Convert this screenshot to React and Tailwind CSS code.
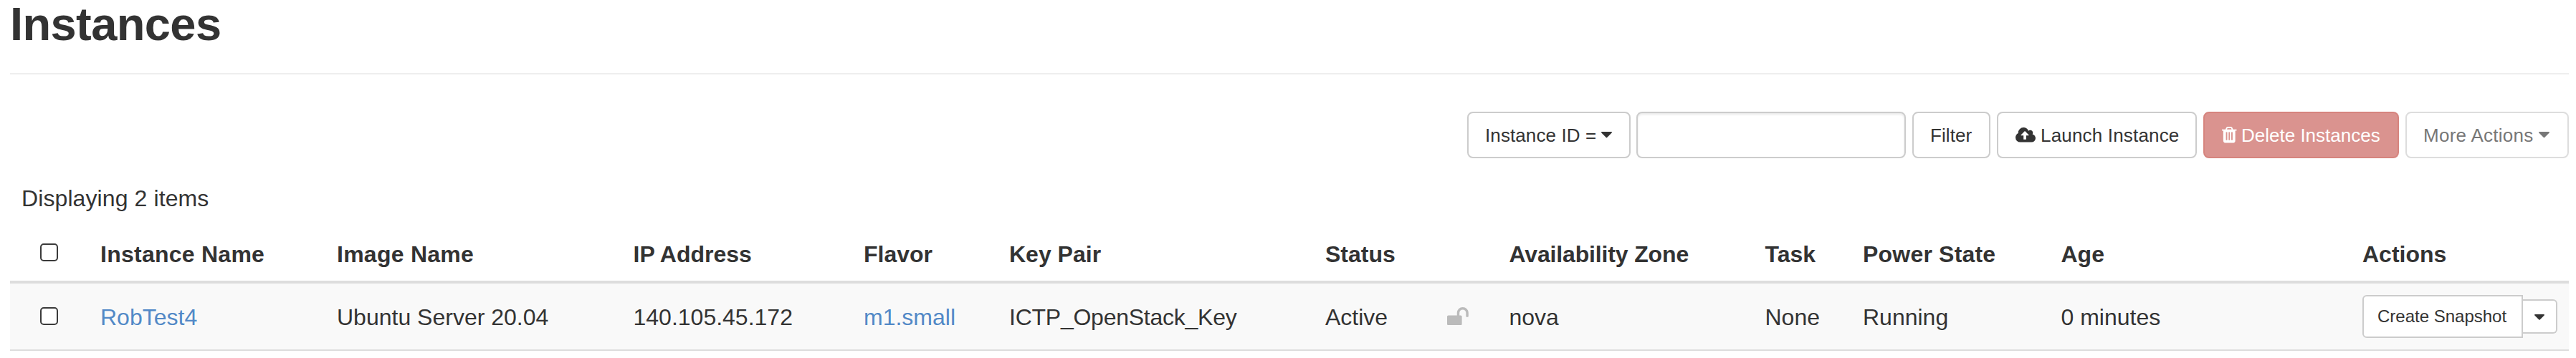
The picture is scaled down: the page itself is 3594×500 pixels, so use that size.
const FONT = 'font-["Liberation_Sans",Arial,sans-serif]';

const COLUMNS =
  "grid grid-cols-[126px_330px_413.5px_321.5px_203px_441px_170px_86.5px_357px_136.5px_276.5px_420.5px_288px]";

function Caret({ className }) {
  return (
    <svg viewBox="384 640 1024 576" fill="currentColor" className={className}>
      <path d="M1408 704q0 26-19 45l-448 448q-19 19-45 19t-45-19l-448-448q-19-19-19-45t19-45 45-19h896q26 0 45 19t19 45z" />
    </svg>
  );
}

function CloudUpload() {
  return (
    <svg viewBox="0 128 1920 1408" fill="currentColor" className="mr-[7px] h-[20.6px] w-7 shrink-0">
      <path d="M1280 864q0-14-9-23l-352-352q-9-9-23-9t-23 9l-351 351q-10 12-10 24 0 14 9 23t23 9h224v352q0 13 9.5 22.5t22.5 9.5h192q13 0 22.5-9.5t9.5-22.5v-352h224q13 0 22.5-9.5t9.5-22.5zm640 288q0 159-112.5 271.5t-271.5 112.5h-1088q-185 0-316.5-131.5t-131.5-316.5q0-130 70-240t188-165q-2-30-2-43 0-212 150-362t362-150q156 0 285.5 87t188.5 231q71-62 166-62 106 0 181 75t75 181q0 76-41 138 130 31 213.5 135.5t83.5 238.5z" />
    </svg>
  );
}

function Trash() {
  return (
    <svg viewBox="192 128 1408 1536" fill="currentColor" className="mr-[6.5px] h-[22.4px] w-[20.5px] shrink-0">
      <path d="M704 1376v-704q0-14-9-23t-23-9h-64q-14 0-23 9t-9 23v704q0 14 9 23t23 9h64q14 0 23-9t9-23zm256 0v-704q0-14-9-23t-23-9h-64q-14 0-23 9t-9 23v704q0 14 9 23t23 9h64q14 0 23-9t9-23zm256 0v-704q0-14-9-23t-23-9h-64q-14 0-23 9t-9 23v704q0 14 9 23t23 9h64q14 0 23-9t9-23zm-544-992h448l-48-117q-7-9-17-11h-317q-10 2-17 11zm928 32v64q0 14-9 23t-23 9h-96v948q0 83-47 143.5t-113 60.5h-832q-66 0-113-58.5t-47-141.5v-952h-96q-14 0-23-9t-9-23v-64q0-14 9-23t23-9h309l70-167q15-37 54-63t79-26h320q40 0 79 26t54 63l70 167h309q14 0 23 9t9 23z" />
    </svg>
  );
}

function Unlock() {
  return (
    <svg viewBox="64 128 1664 1408" fill="currentColor" className="mt-0.5 h-[25.2px] w-[29.8px] text-[#bbb]">
      <path d="M1728 576v256q0 26-19 45t-45 19h-64q-26 0-45-19t-19-45v-256q0-106-75-181t-181-75-181 75-75 181v192h96q40 0 68 28t28 68v576q0 40-28 68t-68 28h-960q-40 0-68-28t-28-68v-576q0-40 28-68t68-28h672v-192q0-185 131.5-316.5t316.5-131.5 316.5 131.5 131.5 316.5z" />
    </svg>
  );
}

function Checkbox({ className }) {
  return (
    <input
      type="checkbox"
      className={`ml-[42px] block h-[25px] w-[25px] appearance-none rounded-[5px] border-2 border-[#3a3a3a] bg-white ${className}`}
    />
  );
}

const BUTTON =
  "flex h-[65px] shrink-0 items-center rounded-lg border-2 whitespace-nowrap text-[26px] leading-[26px]";

export default function App() {
  return (
    <div className={`h-[500px] w-[3594px] bg-white pr-2.5 pl-3.5 text-[#333] ${FONT}`}>
      <header className="h-[104px] border-b-2 border-[#eee] pt-px">
        <h1 className="text-[65px] leading-[65px] font-bold tracking-[-0.6px]">Instances</h1>
      </header>

      <div className="mt-[52px] flex justify-end">
        <button className={`${BUTTON} mr-2 w-[228px] border-[#ccc] bg-white pl-[23px] tracking-[0.1px]`}>
          Instance ID = <Caret className="ml-[7px] h-[8.4px] w-[15px]" />
        </button>
        <input
          type="text"
          className="mr-[9px] h-[65px] w-[376px] rounded-lg border-2 border-[#ccc] bg-white shadow-[inset_0_2px_3px_rgba(0,0,0,0.09)]"
        />
        <button className={`${BUTTON} mr-[9px] w-[109px] border-[#ccc] bg-white pl-[23px] tracking-[0.1px]`}>
          Filter
        </button>
        <button className={`${BUTTON} mr-[9px] w-[279px] border-[#ccc] bg-white pl-6 tracking-[0.18px]`}>
          <CloudUpload />
          Launch Instance
        </button>
        <button className={`${BUTTON} mr-[9px] w-[273px] border-[#d6847e] bg-[#da938f] pl-6 text-white`}>
          <Trash />
          Delete Instances
        </button>
        <button className={`${BUTTON} w-[228px] border-[#ddd] bg-white pl-[23px] tracking-[0.27px] text-[#777]`}>
          More Actions <Caret className="ml-[7px] h-[8.4px] w-[15px]" />
        </button>
      </div>

      <section className="text-[32px] leading-8">
        <p className="mt-10 ml-4 tracking-[0.1px]">Displaying 2 items</p>

        <div className={`${COLUMNS} mt-[46px] h-[57px] border-b-4 border-[#ddd] font-bold`}>
          <div>
            <Checkbox className="mt-px" />
          </div>
          <div className="tracking-[0.25px]">Instance Name</div>
          <div className="tracking-[0.25px]">Image Name</div>
          <div>IP Address</div>
          <div>Flavor</div>
          <div>Key Pair</div>
          <div>Status</div>
          <div />
          <div className="tracking-[-0.15px]">Availability Zone</div>
          <div>Task</div>
          <div className="tracking-[0.2px]">Power State</div>
          <div>Age</div>
          <div>Actions</div>
        </div>

        <div className={`${COLUMNS} h-[94px] border-b-2 border-[#ddd] bg-[#f9f9f9] pt-[31px]`}>
          <div>
            <Checkbox className="mt-0.5" />
          </div>
          <div className="text-[#5289c7]">RobTest4</div>
          <div>Ubuntu Server 20.04</div>
          <div>140.105.45.172</div>
          <div className="text-[#5289c7]">m1.small</div>
          <div className="tracking-[-0.25px]">ICTP_OpenStack_Key</div>
          <div>Active</div>
          <div>
            <Unlock />
          </div>
          <div>nova</div>
          <div>None</div>
          <div>Running</div>
          <div>0 minutes</div>
          <div className="-mt-[15px] flex h-[60px] items-center">
            <button className="flex h-[60px] w-56 items-center rounded-l-md border-2 border-[#ccc] bg-white pl-[19px] text-2xl leading-6 whitespace-nowrap">
              Create Snapshot
            </button>
            <button className="flex h-12 w-12 items-center rounded-r-md border-2 border-l-0 border-[#ccc] bg-white pl-4">
              <Caret className="mt-0.5 h-[7.8px] w-3.5" />
            </button>
          </div>
        </div>
      </section>
    </div>
  );
}
